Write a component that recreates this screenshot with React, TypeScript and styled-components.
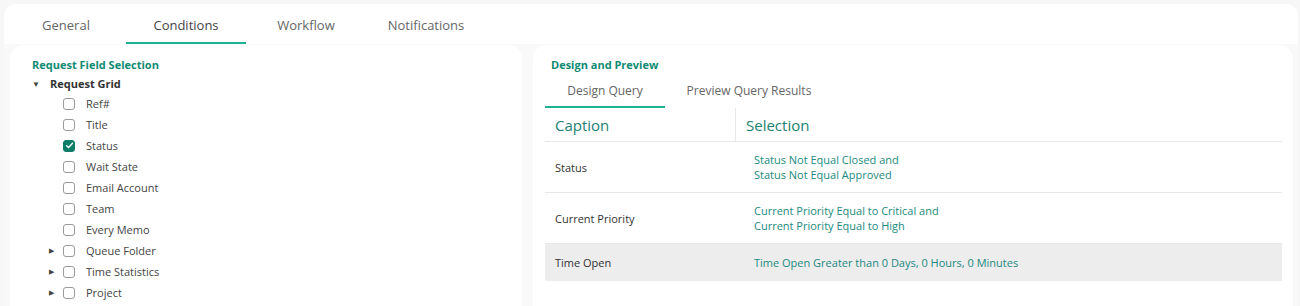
import styled, { createGlobalStyle } from 'styled-components';

const GlobalStyle = createGlobalStyle`
  html, body {
    margin: 0;
    padding: 0;
    background: #f7f7f7;
    font-family: 'Open Sans', 'Liberation Sans', sans-serif;
  }
`;

const TEAL = '#0f8a73';
const ACCENT = '#1bb394';

const mainTabs = ['General', 'Conditions', 'Workflow', 'Notifications'];

const fields = [
  { label: 'Ref#' },
  { label: 'Title' },
  { label: 'Status', checked: true },
  { label: 'Wait State' },
  { label: 'Email Account' },
  { label: 'Team' },
  { label: 'Every Memo' },
  { label: 'Queue Folder', expandable: true },
  { label: 'Time Statistics', expandable: true },
  { label: 'Project', expandable: true },
];

const rows = [
  { caption: 'Status', selection: ['Status Not Equal Closed and', 'Status Not Equal Approved'] },
  { caption: 'Current Priority', selection: ['Current Priority Equal to Critical and', 'Current Priority Equal to High'] },
  { caption: 'Time Open', selection: ['Time Open Greater than 0 Days, 0 Hours, 0 Minutes'], shaded: true },
];

export default () => {
  return (
    <>
      <GlobalStyle />
      <Card>
        <TabBar>
          {mainTabs.map((t) => (
            <Tab key={t} $active={t === 'Conditions'}>
              {t}
            </Tab>
          ))}
        </TabBar>

        <Body>
          <LeftPanel>
            <SectionTitle>Request Field Selection</SectionTitle>
            <GroupRow>
              <Caret>▼</Caret>
              Request Grid
            </GroupRow>
            {fields.map((f) => (
              <FieldRow key={f.label}>
                <Expander>{f.expandable ? '▶' : ''}</Expander>
                <Checkbox $checked={!!f.checked}>
                  {f.checked && (
                    <svg width="9" height="9" viewBox="0 0 10 10">
                      <path d="M1.8 5.2 L4 7.3 L8.3 2.6" fill="none" stroke="#fff" strokeWidth="1.6" strokeLinecap="round" strokeLinejoin="round" />
                    </svg>
                  )}
                </Checkbox>
                <FieldLabel>{f.label}</FieldLabel>
              </FieldRow>
            ))}
          </LeftPanel>

          <RightPanel>
            <SectionTitle>Design and Preview</SectionTitle>
            <SubTabBar>
              <SubTab $active>Design Query</SubTab>
              <SubTab>Preview Query Results</SubTab>
            </SubTabBar>
            <Table>
              <HeaderRow>
                <HeaderCell>Caption</HeaderCell>
                <HeaderCell $divider>Selection</HeaderCell>
              </HeaderRow>
              {rows.map((r) => (
                <Row key={r.caption} $shaded={!!r.shaded}>
                  <CaptionCell>{r.caption}</CaptionCell>
                  <SelectionCell>
                    {r.selection.map((s) => (
                      <div key={s}>{s}</div>
                    ))}
                  </SelectionCell>
                </Row>
              ))}
            </Table>
          </RightPanel>
        </Body>
      </Card>
    </>
  );
};

const Card = styled.div`
  margin: 4px 2px 0 4px;
  height: 302px;
  background: #fff;
  border-radius: 12px 12px 0 0;
  display: flex;
  flex-direction: column;
  overflow: hidden;
`;

const TabBar = styled.div`
  display: flex;
  height: 40px;
  padding-left: 2px;
  flex-shrink: 0;
`;

const Tab = styled.div<{ $active?: boolean }>`
  width: 120px;
  box-sizing: border-box;
  display: flex;
  align-items: center;
  justify-content: center;
  font-size: 13px;
  color: ${(p) => (p.$active ? '#444' : '#666')};
  border-bottom: 2px solid ${(p) => (p.$active ? ACCENT : 'transparent')};
  padding-top: 4px;
`;

const Body = styled.div`
  flex: 1;
  display: flex;
  gap: 11px;
  padding: 1px 5px 0 6px;
  background: #f9f9f9;
`;

const Panel = styled.div`
  background: #fff;
  border-radius: 14px 14px 0 0;
  display: flex;
  flex-direction: column;
`;

const LeftPanel = styled(Panel)`
  width: 512px;
  padding: 12px 0 0 22px;
  box-sizing: border-box;
`;

const RightPanel = styled(Panel)`
  flex: 1;
  padding: 12px 11px 0 12px;
`;

const SectionTitle = styled.div`
  font-size: 11px;
  font-weight: 700;
  color: ${TEAL};
  height: 16px;
  line-height: 16px;
  padding-left: 6px;
  ${LeftPanel} & {
    padding-left: 0;
  }
`;

const GroupRow = styled.div`
  display: flex;
  align-items: center;
  height: 20px;
  font-size: 11px;
  font-weight: 700;
  color: #333;
`;

const Caret = styled.span`
  width: 18px;
  font-size: 8px;
  color: #444;
`;

const FieldRow = styled.div`
  display: flex;
  align-items: center;
  height: 21px;
  padding-left: 17px;
`;

const Expander = styled.span`
  width: 14px;
  font-size: 7px;
  color: #444;
`;

const Checkbox = styled.span<{ $checked: boolean }>`
  width: 12px;
  height: 12px;
  box-sizing: border-box;
  border-radius: 3px;
  border: 1px solid ${(p) => (p.$checked ? '#0f7d69' : '#9a9a9a')};
  background: ${(p) => (p.$checked ? '#0f7d69' : '#fff')};
  display: flex;
  align-items: center;
  justify-content: center;
`;

const FieldLabel = styled.span`
  margin-left: 11px;
  font-size: 11px;
  color: #444;
`;

const SubTabBar = styled.div`
  display: flex;
  height: 35px;
`;

const SubTab = styled.div<{ $active?: boolean }>`
  width: ${(p) => (p.$active ? '120px' : '168px')};
  box-sizing: border-box;
  display: flex;
  align-items: center;
  justify-content: center;
  font-size: 12px;
  color: #666;
  padding-top: 2px;
  border-bottom: 2px solid ${(p) => (p.$active ? ACCENT : 'transparent')};
`;

const Table = styled.div`
  display: flex;
  flex-direction: column;
`;

const HeaderRow = styled.div`
  display: grid;
  grid-template-columns: 190px 1fr;
  height: 33px;
  border-bottom: 1px solid #e8e8e8;
`;

const HeaderCell = styled.div<{ $divider?: boolean }>`
  display: flex;
  align-items: center;
  padding-left: 10px;
  font-size: 15px;
  color: #1d7f74;
  border-left: ${(p) => (p.$divider ? '1px solid #e8e8e8' : 'none')};
`;

const Row = styled.div<{ $shaded: boolean }>`
  display: grid;
  grid-template-columns: 199px 1fr;
  align-items: center;
  min-height: ${(p) => (p.$shaded ? '37px' : '50px')};
  background: ${(p) => (p.$shaded ? '#ededed' : '#fff')};
  border-bottom: ${(p) => (p.$shaded ? 'none' : '1px solid #e8e8e8')};
`;

const CaptionCell = styled.div`
  padding-left: 10px;
  font-size: 11px;
  color: #333;
`;

const SelectionCell = styled.div`
  padding-left: 10px;
  font-size: 11px;
  line-height: 15px;
  color: #1b8a80;
`;
